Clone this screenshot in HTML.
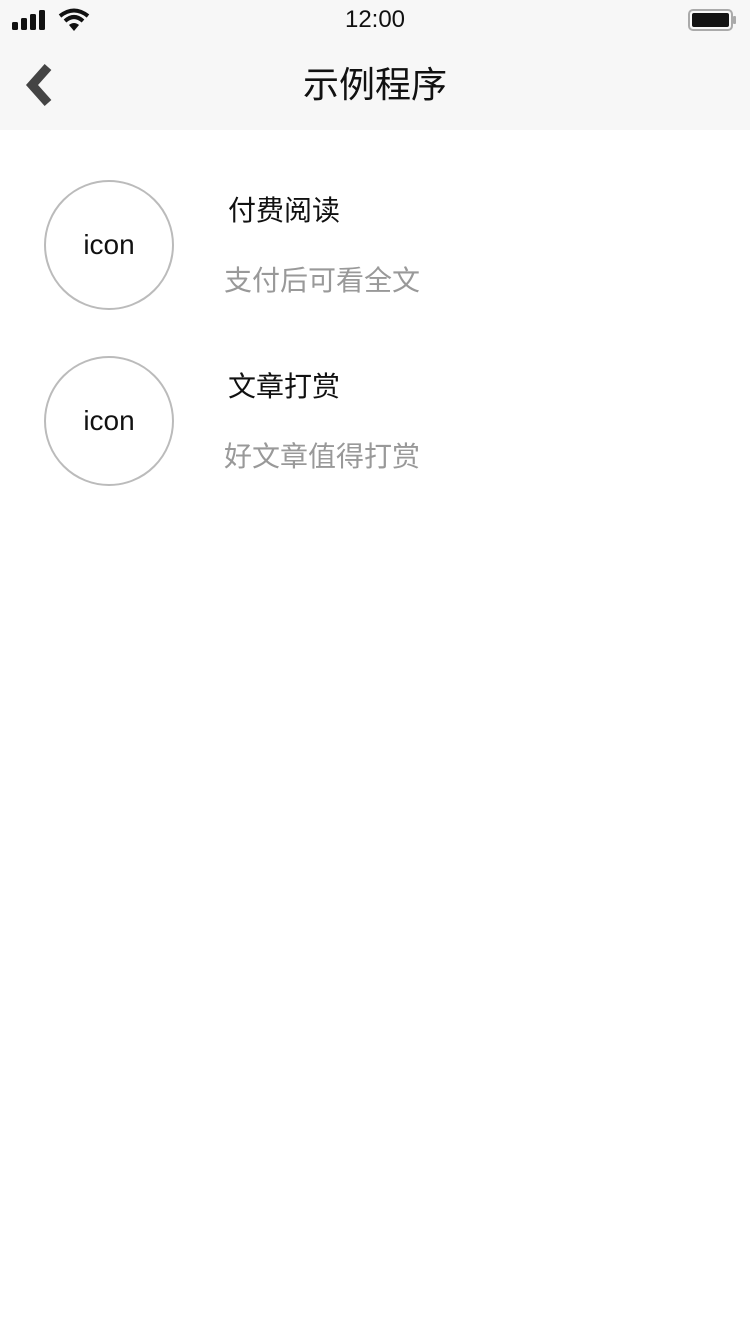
<!DOCTYPE html>
<html><head><meta charset="utf-8"><style>
body{margin:0;width:750px;height:1334px;background:#fff;font-family:"Liberation Sans","Noto Sans CJK SC",sans-serif;position:relative;overflow:hidden}
.hdr{position:absolute;left:0;top:0;width:750px;height:130px;background:#f7f7f7}
.time{position:absolute;left:0;width:750px;top:6px;text-align:center;font-size:24px;color:#111}
.title{position:absolute;left:0;width:750px;top:56px;text-align:center;font-size:36px;color:#111}
.c{position:absolute;left:44px;width:126px;height:126px;border:2px solid #bbb;border-radius:50%;text-align:center;line-height:126px;font-size:28px;color:#111}
.t{position:absolute;left:228px;font-size:28px;color:#111}
.s{position:absolute;left:224px;font-size:28px;color:#999}
</style></head><body>
<div class="hdr">
<svg style="position:absolute;left:12px;top:10px" width="34" height="20"><rect x="0" y="12" width="6" height="8" rx="1.5" fill="#111"/><rect x="9" y="8" width="6" height="12" rx="1.5" fill="#111"/><rect x="18" y="4" width="6" height="16" rx="1.5" fill="#111"/><rect x="27" y="0" width="6" height="20" rx="1.5" fill="#111"/></svg>
<svg style="position:absolute;left:58px;top:8px" width="32" height="24" viewBox="0 0 32 24"><path d="M2 8 Q16 -3 30 8" stroke="#111" stroke-width="4" fill="none"/><path d="M7 13 Q16 5 25 13" stroke="#111" stroke-width="4" fill="none"/><path d="M11 17 L16 23 L21 17 Q16 13 11 17Z" fill="#111"/></svg>
<div class="time">12:00</div>
<svg style="position:absolute;left:688px;top:9px" width="50" height="22"><rect x="1" y="1" width="43" height="20" rx="4" fill="none" stroke="#aaa" stroke-width="2"/><rect x="4" y="4" width="37" height="14" rx="2" fill="#111"/><rect x="45" y="7" width="3" height="8" rx="1" fill="#aaa"/></svg>
<svg style="position:absolute;left:20px;top:62px" width="36" height="46"><path d="M28 5 L12 23 L28 41" stroke="#444" stroke-width="9" fill="none" stroke-linejoin="miter"/></svg>
<div class="title">示例程序</div>
</div>
<div class="c" style="top:180px">icon</div>
<div class="t" style="top:189px">付费阅读</div>
<div class="s" style="top:259px">支付后可看全文</div>
<div class="c" style="top:356px">icon</div>
<div class="t" style="top:365px">文章打赏</div>
<div class="s" style="top:435px">好文章值得打赏</div>
</body></html>
